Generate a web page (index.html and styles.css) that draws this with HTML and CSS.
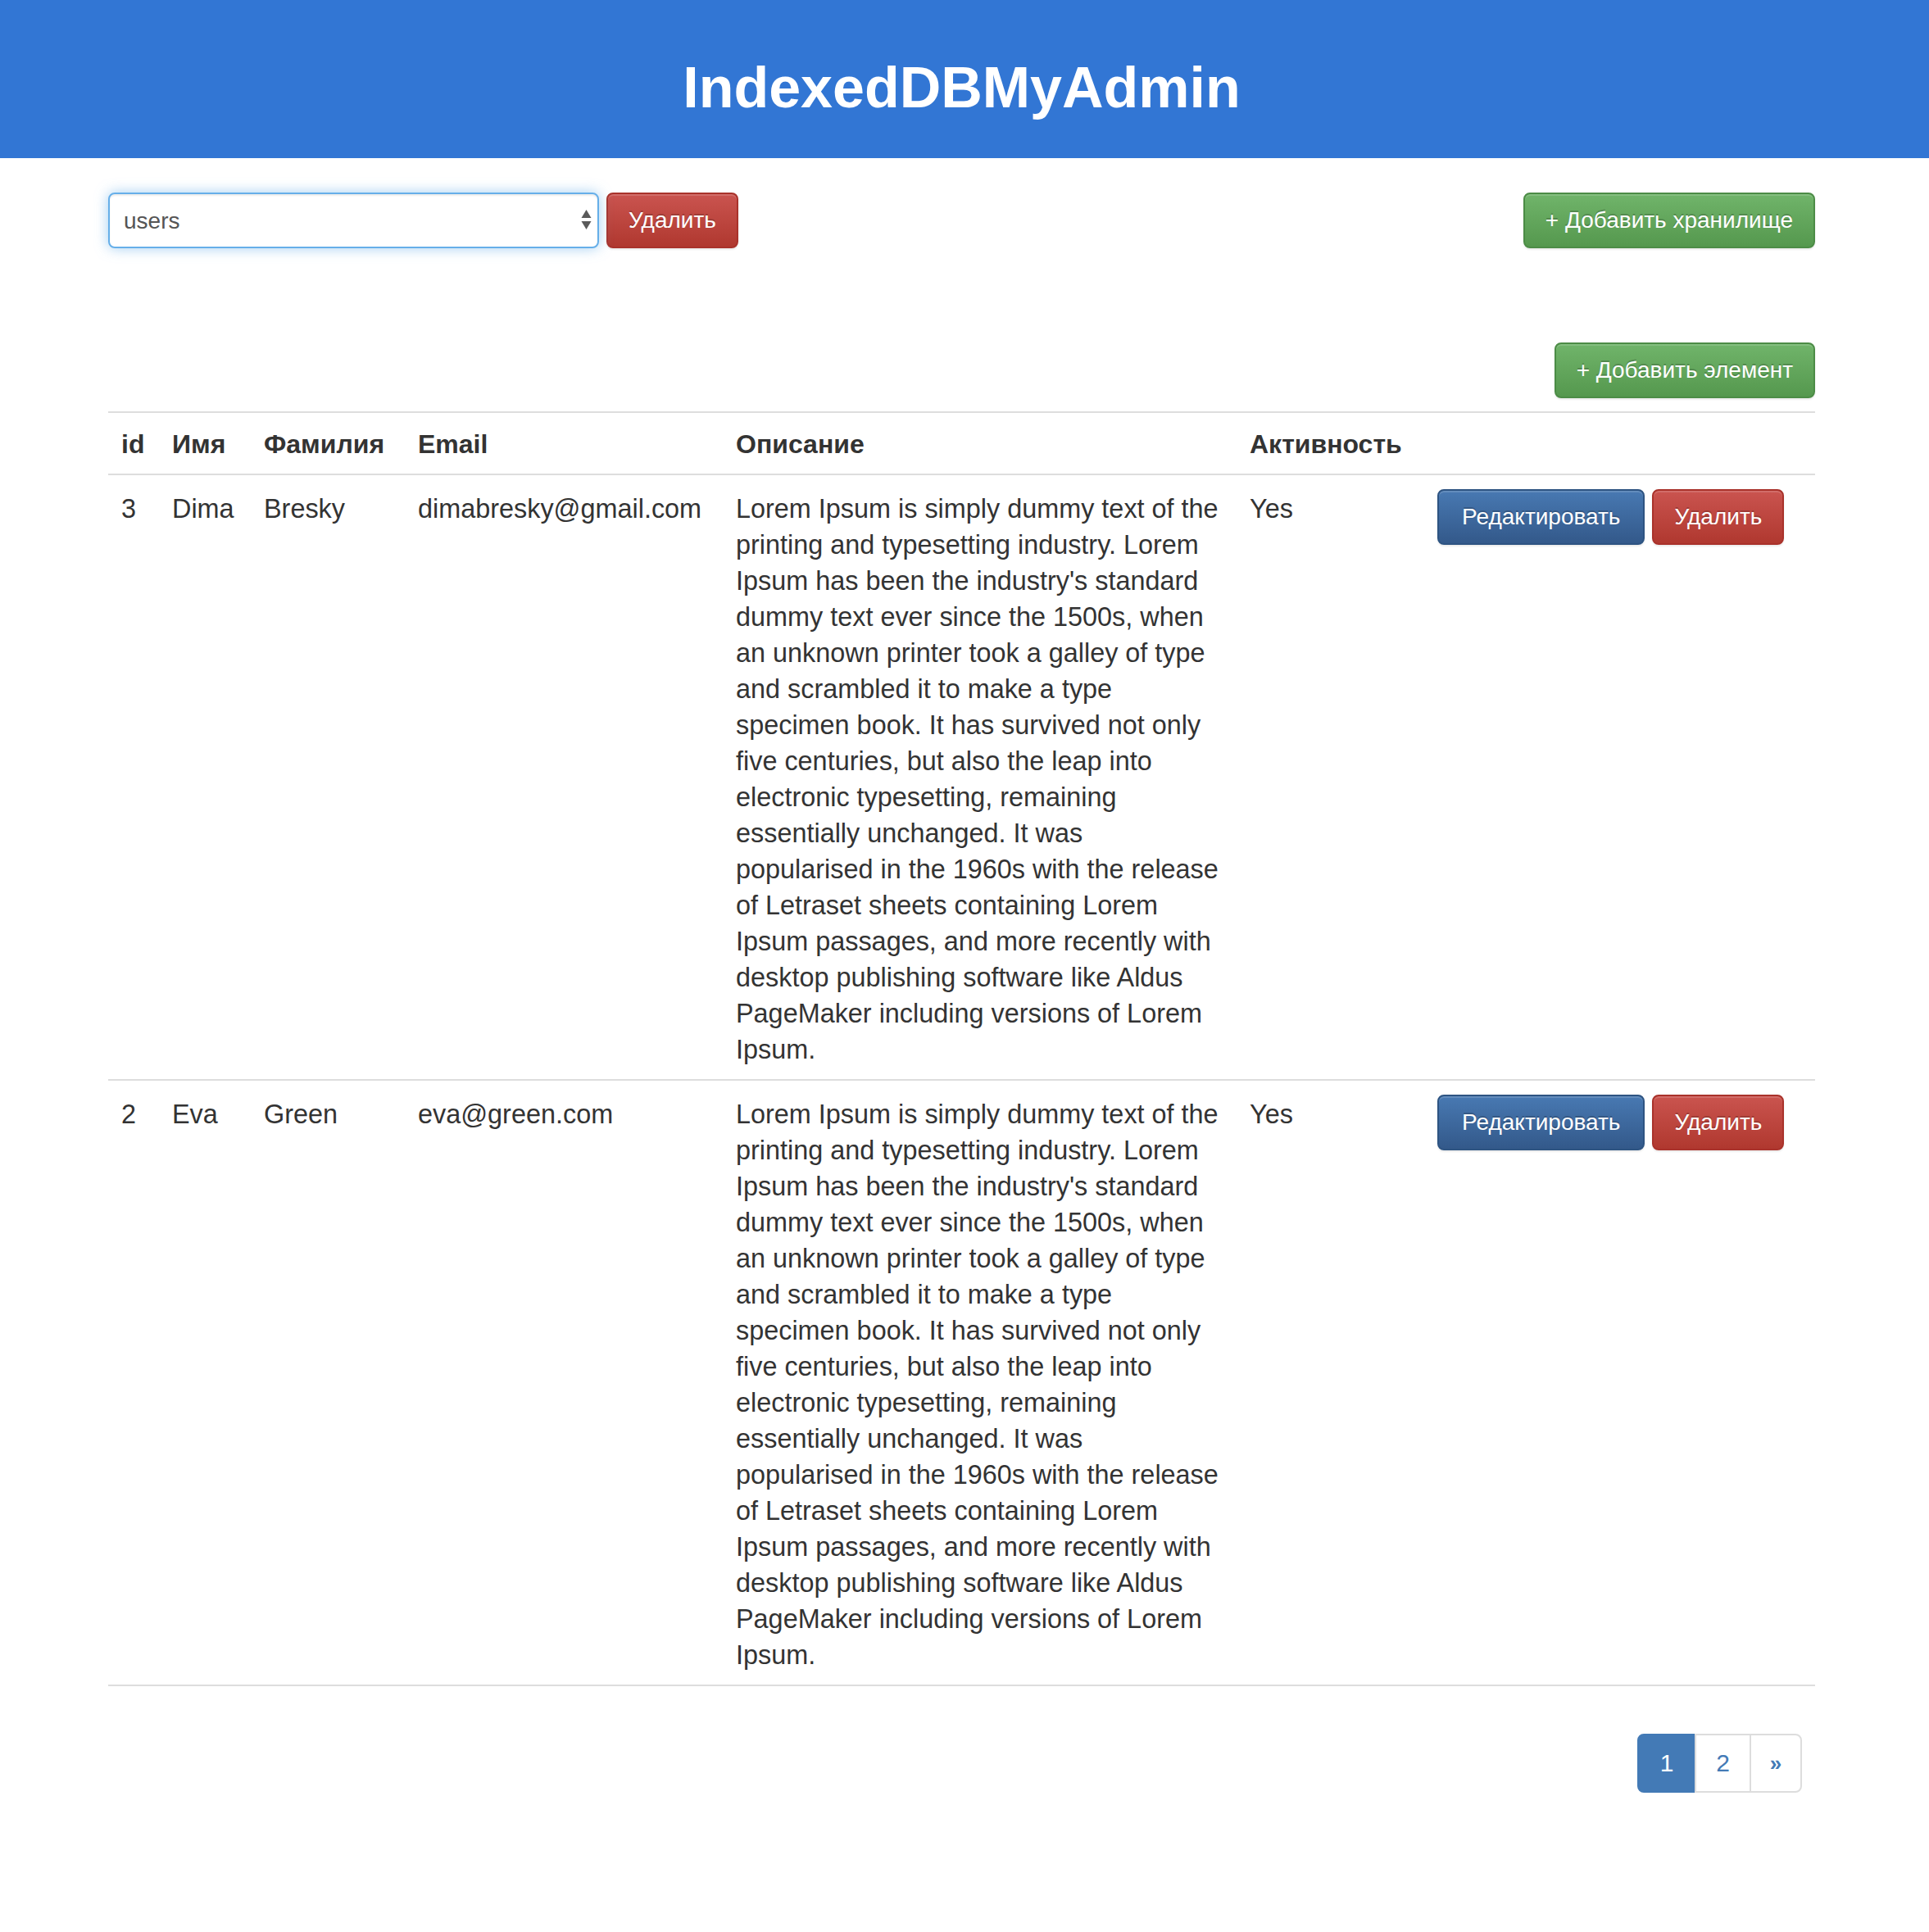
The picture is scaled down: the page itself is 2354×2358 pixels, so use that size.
FILE: index.html
```html
<!DOCTYPE html>
<html lang="ru">
<head>
<meta charset="utf-8">
<title>IndexedDBMyAdmin</title>
<link rel="stylesheet" href="styles.css">
</head>
<body>
<header class="site-header">
  <h1 class="site-title">IndexedDBMyAdmin</h1>
</header>
<main class="container">
  <div class="toolbar">
    <div class="store-picker">
      <span class="select-wrap">
        <select class="store-select">
          <option>users</option>
        </select>
        <svg class="select-arrows" viewBox="0 0 13 25" aria-hidden="true">
          <polygon points="6.5,0 12.5,10 0.5,10"/>
          <polygon points="0.5,14 12.5,14 6.5,24"/>
        </svg>
      </span>
      <button class="btn btn-danger">Удалить</button>
    </div>
    <button class="btn btn-success">+ Добавить хранилище</button>
  </div>

  <div class="add-row">
    <button class="btn btn-success">+ Добавить элемент</button>
  </div>

  <table class="data-table">
    <colgroup>
      <col class="c-id"><col class="c-name"><col class="c-surname"><col class="c-email"><col class="c-desc"><col class="c-active"><col class="c-actions">
    </colgroup>
    <thead>
      <tr><th>id</th><th>Имя</th><th>Фамилия</th><th>Email</th><th>Описание</th><th>Активность</th><th></th></tr>
    </thead>
    <tbody>
      <tr>
        <td>3</td><td>Dima</td><td>Bresky</td><td>dimabresky@gmail.com</td>
        <td>Lorem Ipsum is simply dummy text of the printing and typesetting industry. Lorem Ipsum has been the industry's standard dummy text ever since the 1500s, when an unknown printer took a galley of type and scrambled it to make a type specimen book. It has survived not only five centuries, but also the leap into electronic typesetting, remaining essentially unchanged. It was popularised in the 1960s with the release of Letraset sheets containing Lorem Ipsum passages, and more recently with desktop publishing software like Aldus PageMaker including versions of Lorem Ipsum.</td>
        <td>Yes</td>
        <td><div class="actions"><button class="btn btn-primary">Редактировать</button><button class="btn btn-danger">Удалить</button></div></td>
      </tr>
      <tr>
        <td>2</td><td>Eva</td><td>Green</td><td>eva@green.com</td>
        <td>Lorem Ipsum is simply dummy text of the printing and typesetting industry. Lorem Ipsum has been the industry's standard dummy text ever since the 1500s, when an unknown printer took a galley of type and scrambled it to make a type specimen book. It has survived not only five centuries, but also the leap into electronic typesetting, remaining essentially unchanged. It was popularised in the 1960s with the release of Letraset sheets containing Lorem Ipsum passages, and more recently with desktop publishing software like Aldus PageMaker including versions of Lorem Ipsum.</td>
        <td>Yes</td>
        <td><div class="actions"><button class="btn btn-primary">Редактировать</button><button class="btn btn-danger">Удалить</button></div></td>
      </tr>
    </tbody>
  </table>

  <nav class="pager-row">
    <ul class="pagination">
      <li class="active"><a href="#">1</a></li>
      <li><a href="#">2</a></li>
      <li class="next"><a href="#">&raquo;</a></li>
    </ul>
  </nav>
</main>
</body>
</html>
```
FILE: styles.css
```css
* { box-sizing: border-box; }
html, body { margin: 0; padding: 0; }
body {
  font-family: "Liberation Sans", Arial, Helvetica, sans-serif;
  color: #333;
  background: #fff;
}

.site-header {
  background: #3276d4;
  padding: 68px 7px 47px 0;
  text-align: center;
}
.site-title {
  margin: 0;
  font-size: 70px;
  line-height: 78px;
  font-weight: 700;
  color: #fff;
}

.container { margin: 0 139px 0 132px; }

.toolbar {
  display: flex;
  align-items: center;
  justify-content: space-between;
  margin-top: 42px;
}
.store-picker { display: flex; gap: 9px; }
.select-wrap {
  position: relative;
  display: block;
  width: 599px;
  height: 68px;
}
.store-select {
  -webkit-appearance: none;
  appearance: none;
  width: 100%;
  height: 100%;
  border: 2px solid #66afe9;
  border-radius: 8px;
  box-shadow: inset 0 2px 2px rgba(0,0,0,.075), 0 0 16px rgba(102,175,233,.6);
  padding: 0 40px 0 17px;
  font: 28px "Liberation Sans", Arial, sans-serif;
  color: #555;
  background: #fff;
  outline: none;
}
.select-arrows {
  position: absolute;
  right: 9px;
  top: 21px;
  width: 13px;
  height: 25px;
  fill: #5a5a5a;
  pointer-events: none;
}

.btn {
  display: inline-block;
  height: 68px;
  padding: 12px 25px;
  font: 28px/40px "Liberation Sans", Arial, sans-serif;
  color: #fff;
  border: 2px solid transparent;
  border-radius: 8px;
  text-shadow: 0 -2px 0 rgba(0,0,0,.2);
  box-shadow: inset 0 2px 0 rgba(255,255,255,.15), 0 2px 2px rgba(0,0,0,.075);
  white-space: nowrap;
  cursor: pointer;
}
.btn-danger { background: linear-gradient(#ca544f, #b0382f); border-color: #a9322b; }
.btn-success { background: linear-gradient(#70b46a, #55984e); border-color: #4c8c46; }
.btn-primary {
  padding: 12px 28px;
  background: linear-gradient(#4879b2, #33598a);
  border-color: #2e5482;
}

.add-row {
  display: flex;
  justify-content: flex-end;
  margin-top: 115px;
}

.data-table {
  width: 100%;
  margin-top: 16px;
  border-collapse: separate;
  border-spacing: 0;
  table-layout: fixed;
  font-size: 32.4px;
  line-height: 44px;
}
.c-id { width: 62px; }
.c-name { width: 112px; }
.c-surname { width: 188px; }
.c-email { width: 388px; }
.c-desc { width: 627px; }
.c-active { width: 229px; }
.c-actions { width: 477px; }

.data-table th {
  text-align: left;
  font-size: 32px;
  font-weight: 700;
  padding: 16px 16px 14px;
  border-top: 2px solid #ddd;
  border-bottom: 2px solid #ddd;
  white-space: nowrap;
}
.data-table td {
  vertical-align: top;
  padding: 19px 16px 14px;
  border-bottom: 2px solid #ddd;
}
.actions {
  display: flex;
  gap: 9px;
  margin-top: -2px;
}

.pager-row {
  display: flex;
  justify-content: flex-end;
  margin: 58px 16px 0 0;
}
.pagination {
  display: flex;
  list-style: none;
  margin: 0;
  padding: 0;
}
.pagination a {
  display: block;
  width: 69px;
  margin-left: -2px;
  padding: 12px 0;
  font-size: 30px;
  line-height: 44px;
  text-align: center;
  color: #437ab6;
  text-decoration: none;
  background: #fff;
  border: 2px solid #ddd;
}
.pagination .active a {
  width: 72px;
  margin-left: 0;
  color: #fff;
  background: #437ab6;
  border-color: #437ab6;
  border-radius: 8px 0 0 8px;
}
.pagination .next a {
  width: 64px;
  font-size: 26px;
  font-weight: 700;
  border-radius: 0 8px 8px 0;
}
```
